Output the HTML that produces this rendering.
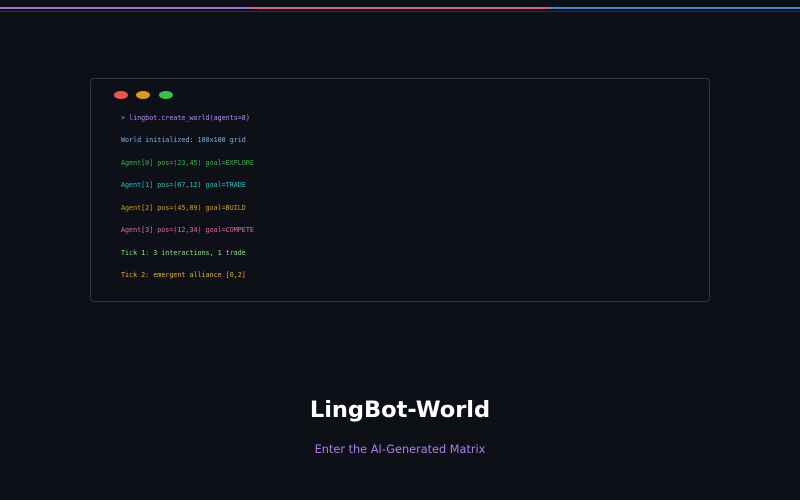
<!DOCTYPE html>
<html><head><style>
body{margin:0;width:800px;height:500px;background:#0d1017;overflow:hidden;position:relative;font-family:"DejaVu Sans","Liberation Sans",sans-serif}
.bar{position:absolute;top:7px;height:2px}
.bar2{position:absolute;top:11px;height:1px}
.box{position:absolute;left:90px;top:78px;width:620px;height:224px;border:1px solid #30343c;border-radius:4px;box-sizing:border-box}
.dot{position:absolute;top:91px;width:14px;height:8px;border-radius:50%}
.l{position:absolute;left:121px;font-family:"DejaVu Sans Mono","Liberation Mono",monospace;font-size:6.7px;line-height:8px;white-space:pre}
h1{position:absolute;top:396px;left:0;width:800px;margin:0;text-align:center;font-size:22.5px;line-height:28px;font-weight:bold;color:#fff}
p{position:absolute;top:443px;left:0;width:800px;margin:0;text-align:center;font-size:11.3px;line-height:14px;color:#b07ee8}
</style></head><body>
<div class="bar" style="left:0;width:250px;background:#9d6ed6"></div>
<div class="bar" style="left:250px;width:300px;background:#d95c8d"></div>
<div class="bar" style="left:550px;width:250px;background:#3d86d6"></div>
<div class="bar2" style="left:0;width:250px;background:#3b2f52"></div>
<div class="bar2" style="left:250px;width:300px;background:#44283a"></div>
<div class="bar2" style="left:550px;width:250px;background:#1e344f"></div>
<div class="box"></div>
<div class="dot" style="left:114px;background:#f0524f"></div>
<div class="dot" style="left:136px;background:#d99a1e"></div>
<div class="dot" style="left:159px;background:#3bbd4a"></div>
<div class="l" style="top:114px;color:#c08af2"><span style="color:#aaa">&gt;</span> lingbot.create_world(agents=8)</div>
<div class="l" style="top:136px;color:#7cb4e8">World initialized: 100x100 grid</div>
<div class="l" style="top:159px;color:#3db34f">Agent[0] pos=(23,45) goal=EXPLORE</div>
<div class="l" style="top:181px;color:#2bc4c4">Agent[1] pos=(67,12) goal=TRADE</div>
<div class="l" style="top:204px;color:#d99a1e">Agent[2] pos=(45,89) goal=BUILD</div>
<div class="l" style="top:226px;color:#e06aab">Agent[3] pos=(12,34) goal=COMPETE</div>
<div class="l" style="top:249px;color:#8ee08e">Tick 1: 3 interactions, 1 trade</div>
<div class="l" style="top:271px;color:#e8b02a">Tick 2: emergent alliance [0,2]</div>
<h1>LingBot-World</h1>
<p>Enter the AI-Generated Matrix</p>
</body></html>
